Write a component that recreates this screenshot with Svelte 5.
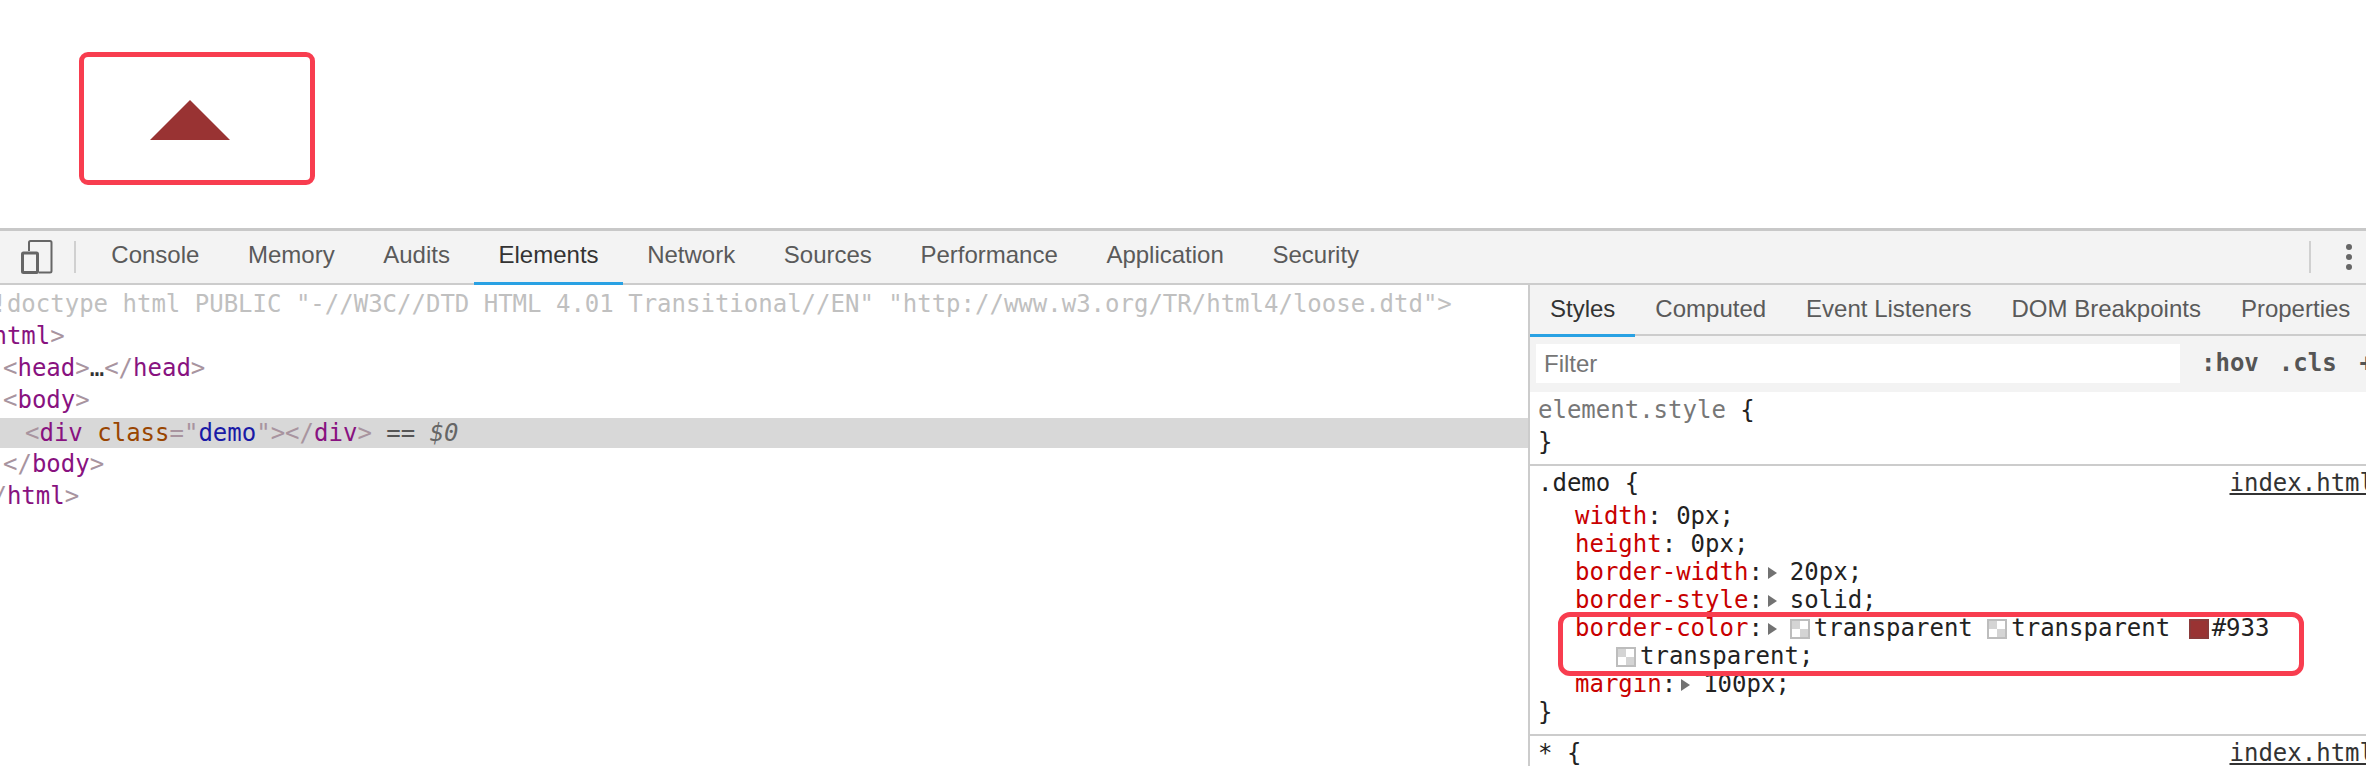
<script>
  const tabs = ['Console', 'Memory', 'Audits', 'Elements', 'Network', 'Sources', 'Performance', 'Application', 'Security'];
  const sideTabs = ['Styles', 'Computed', 'Event Listeners', 'DOM Breakpoints', 'Properties'];
</script>

<div class="page">
  <section class="stage">
    <div class="callout"><div class="triangle"></div></div>
  </section>

  <section class="devtools">
    <header class="toolbar">
      <div class="device">
        <svg width="32" height="34" viewBox="0 0 32 34" fill="none" stroke="#666">
          <path d="M8 11V2.500a1.500 1.500 0 0 1 1.500-1.500H29a1.500 1.500 0 0 1 1.500 1.500V31a1.500 1.500 0 0 1-1.500 1.500H18" stroke-width="2" />
          <rect x="1.500" y="13" width="15" height="19.500" rx="1" stroke-width="3" />
        </svg>
      </div>
      <div class="divider first"></div>
      <nav class="tabs">
        {#each tabs as tab}
          <span class="tab" class:active={tab === 'Elements'}>{tab}</span>
        {/each}
      </nav>
      <div class="divider last"></div>
      <svg class="kebab" width="8" height="28" viewBox="0 0 8 28" fill="#666">
        <circle cx="4" cy="4" r="3" /><circle cx="4" cy="14" r="3" /><circle cx="4" cy="24" r="3" />
      </svg>
    </header>

    <div class="panels">
      <div class="dom">
        <div class="line doctype">{'<!doctype html PUBLIC "-//W3C//DTD HTML 4.01 Transitional//EN" "http://www.w3.org/TR/html4/loose.dtd">'}</div>
        <div class="line"><span class="br">&lt;</span><span class="tag">html</span><span class="br">&gt;</span></div>
        <div class="line in1"><span class="br">&lt;</span><span class="tag">head</span><span class="br">&gt;</span><span class="dots">…</span><span class="br">&lt;/</span><span class="tag">head</span><span class="br">&gt;</span></div>
        <div class="line in1"><span class="br">&lt;</span><span class="tag">body</span><span class="br">&gt;</span></div>
        <div class="line in2 selected"><span class="br">&lt;</span><span class="tag">div</span>{' '}<span class="attr">class</span><span class="br">="</span><span class="val">demo</span><span class="br">"&gt;&lt;/</span><span class="tag">div</span><span class="br">&gt;</span><span class="eq">{' == '}</span><em class="ref">$0</em></div>
        <div class="line in1"><span class="br">&lt;/</span><span class="tag">body</span><span class="br">&gt;</span></div>
        <div class="line"><span class="br">&lt;/</span><span class="tag">html</span><span class="br">&gt;</span></div>
      </div>

      <aside class="side">
        <nav class="side-tabs">
          {#each sideTabs as tab}
            <span class="side-tab" class:active={tab === 'Styles'}>{tab}</span>
          {/each}
        </nav>

        <div class="filter">
          <div class="input">Filter</div>
          <span class="toggle hov">:hov</span>
          <span class="toggle cls">.cls</span>
          <span class="toggle plus">+</span>
        </div>

        <div class="rule first-rule">
          <div class="sel-line"><span class="muted">element.style</span>{' {'}</div>
          <div class="sel-line">{'}'}</div>
        </div>

        <div class="rule demo-rule">
          <div class="sel-line head"><span>{'.demo {'}</span><span class="src">index.html</span></div>
          <div class="props">
            <div class="prop"><span class="name">width</span>{': 0px;'}</div>
            <div class="prop"><span class="name">height</span>{': 0px;'}</div>
            <div class="prop"><span class="name">border-width</span>:<i class="arrow"></i>20px;</div>
            <div class="prop"><span class="name">border-style</span>:<i class="arrow"></i>solid;</div>
            <div class="annotated">
              <div class="prop"><span class="name">border-color</span>:<i class="arrow"></i><i class="swatch"></i>transparent{' '}<i class="swatch"></i>transparent{' '}<i class="swatch solid"></i>#933</div>
              <div class="prop wrap"><i class="swatch"></i>transparent;</div>
              <div class="highlight"></div>
            </div>
            <div class="prop"><span class="name">margin</span>:<i class="arrow"></i>100px;</div>
            <div class="prop close">{'}'}</div>
          </div>
        </div>

        <div class="rule last-rule">
          <div class="sel-line head"><span>{'* {'}</span><span class="src">index.html</span></div>
        </div>
      </aside>
    </div>
  </section>
</div>

<style>
  :global(body) {
    margin: 0;
    background: #fff;
  }

  .page {
    width: 2366px;
    height: 766px;
    overflow: hidden;
    display: flex;
    flex-direction: column;
    font-family: "Liberation Sans", Arial, sans-serif;
    font-size: 24px;
    color: #333;
  }

  .stage {
    height: 228px;
    padding: 52px 0 0 79px;
    box-sizing: border-box;
    flex: none;
  }

  .callout {
    width: 236px;
    height: 133px;
    box-sizing: border-box;
    border: 5px solid #f83d4f;
    border-radius: 9px;
    padding: 43px 0 0 66px;
  }

  .triangle {
    width: 0;
    height: 0;
    border-style: solid;
    border-width: 0 40px 40px;
    border-color: transparent transparent #933;
  }

  .devtools {
    flex: 1;
    min-height: 0;
    display: flex;
    flex-direction: column;
    border-top: 3px solid #c8c8c8;
  }

  .toolbar {
    height: 52px;
    flex: none;
    display: flex;
    align-items: center;
    background: #f3f3f3;
    border-bottom: 2px solid #ccc;
  }

  .device {
    width: 74px;
    padding-left: 21px;
    box-sizing: border-box;
    display: flex;
    flex: none;
  }

  .divider {
    width: 2px;
    height: 32px;
    background: #d0d0d0;
    flex: none;
  }

  .tabs {
    display: flex;
    align-self: stretch;
    margin-left: 11px;
    flex: 1;
  }

  .tab {
    height: 54px;
    box-sizing: border-box;
    padding: 0 24.3px 3px;
    display: flex;
    align-items: center;
    color: #5a5a5a;
    border-bottom: 3px solid transparent;
  }

  .tab.active {
    color: #333;
    border-bottom-color: #29a1e3;
  }

  .kebab {
    margin-left: 34px;
    margin-right: 13px;
    flex: none;
  }

  .panels {
    flex: 1;
    min-height: 0;
    display: flex;
  }

  .dom {
    width: 1528px;
    flex: none;
    overflow: hidden;
    padding-top: 3px;
    box-sizing: border-box;
    font-family: "DejaVu Sans Mono", "Liberation Mono", monospace;
  }

  .line {
    height: 32px;
    line-height: 32px;
    white-space: pre;
    margin-left: -22px;
    padding-left: 0;
  }

  .doctype {
    color: #c0c0c0;
  }

  .in1 {
    margin-left: 3px;
  }

  .in2 {
    margin-left: 0;
    padding-left: 25px;
  }

  .selected {
    height: 30px;
    line-height: 30px;
    margin-top: 2px;
    background: #d8d8d8;
  }

  .br {
    color: #a8949f;
  }

  .tag {
    color: #881280;
  }

  .attr {
    color: #994500;
  }

  .val {
    color: #1a1aa6;
  }

  .dots {
    color: #333;
  }

  .eq {
    color: #555;
  }

  .ref {
    color: #666;
  }

  .side {
    flex: 1;
    min-width: 0;
    overflow: hidden;
    border-left: 2px solid #ccc;
    font-family: "DejaVu Sans Mono", "Liberation Mono", monospace;
    color: #222;
  }

  .side-tabs {
    height: 51px;
    box-sizing: border-box;
    display: flex;
    background: #f3f3f3;
    border-bottom: 2px solid #ccc;
    font-family: "Liberation Sans", Arial, sans-serif;
    white-space: nowrap;
  }

  .side-tab {
    height: 52px;
    box-sizing: border-box;
    padding: 0 20px 2px;
    display: flex;
    align-items: center;
    flex: none;
    color: #5a5a5a;
    border-bottom: 3px solid transparent;
  }

  .side-tab.active {
    color: #333;
    border-bottom-color: #29a1e3;
  }

  .filter {
    height: 56px;
    box-sizing: border-box;
    display: flex;
    align-items: center;
    padding: 0 0 2px 6px;
    background: #f3f3f3;
    white-space: nowrap;
  }

  .input {
    width: 644px;
    height: 39px;
    line-height: 39px;
    box-sizing: border-box;
    padding-left: 8px;
    flex: none;
    background: #fff;
    color: #757575;
    font-family: "Liberation Sans", Arial, sans-serif;
  }

  .toggle {
    font-weight: 700;
    color: #555;
    flex: none;
  }

  .hov {
    margin-left: 21px;
  }

  .cls {
    margin-left: 20px;
  }

  .plus {
    margin-left: 23px;
  }

  .rule {
    border-bottom: 2px solid #ccc;
    overflow: hidden;
  }

  .first-rule {
    padding: 2px 0 6px;
  }

  .demo-rule {
    padding-top: 1px;
  }

  .last-rule {
    border-bottom: 0;
    padding-top: 1px;
  }

  .sel-line {
    height: 32px;
    line-height: 32px;
    padding-left: 8px;
    white-space: pre;
  }

  .muted {
    color: #777;
  }

  .head {
    display: flex;
    justify-content: space-between;
  }

  .src {
    color: #333;
    text-decoration: underline;
    margin-right: -8px;
    flex: none;
  }

  .props {
    padding-top: 3px;
    padding-bottom: 8px;
  }

  .prop {
    height: 28px;
    line-height: 28px;
    padding-left: 45px;
    white-space: pre;
  }

  .prop.wrap {
    padding-left: 86px;
  }

  .prop.close {
    padding-left: 8px;
  }

  .name {
    color: #c80000;
  }

  .arrow {
    display: inline-block;
    width: 0;
    height: 0;
    margin: 0 13px 1px 5px;
    border-style: solid;
    border-width: 6px 0 6px 9px;
    border-color: transparent transparent transparent #727272;
  }

  .swatch {
    display: inline-block;
    width: 20px;
    height: 20px;
    box-sizing: border-box;
    margin: 0 4px 0 0;
    vertical-align: -3px;
    border: 2px solid #bdbdbd;
    background: conic-gradient(#fff 0 25%, #d4d4d4 0 50%, #fff 0 75%, #d4d4d4 0);
  }

  .swatch.solid {
    margin-left: 4px;
    margin-right: 3px;
    background: #933;
    border-color: #8a3a3a;
  }

  .annotated {
    position: relative;
  }

  .highlight {
    position: absolute;
    left: 28px;
    top: -2px;
    width: 746px;
    height: 64px;
    box-sizing: border-box;
    border: 5px solid #f83d4f;
    border-radius: 12px;
    pointer-events: none;
  }
</style>
